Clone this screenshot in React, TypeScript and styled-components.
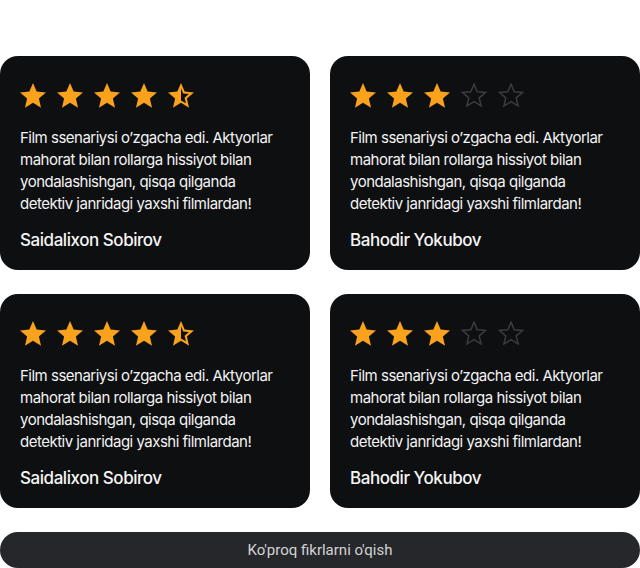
import React from "react";
import styled, { createGlobalStyle } from "styled-components";

const Global = createGlobalStyle`
  html, body { margin: 0; padding: 0; background: #ffffff; }
  * { box-sizing: border-box; }
`;

const Page = styled.div`
  width: 640px;
  padding-top: 56px;
  display: flex;
  flex-direction: column;
  gap: 24px;
  font-family: Inter, "Noto Sans", sans-serif;
`;

const Grid = styled.div`
  display: grid;
  grid-template-columns: 310px 310px;
  column-gap: 20px;
  row-gap: 24px;
`;

const Card = styled.div`
  background: #0e0f11;
  border-radius: 18px;
  height: 214px;
  padding: 27px 30px 18px 20px;
  display: flex;
  flex-direction: column;
`;

const Stars = styled.div`
  display: flex;
  gap: 11px;
  height: 25px;
  align-items: center;
`;

const Text = styled.p`
  margin: 19px 0 0;
  font-size: 15px;
  line-height: 22px;
  color: #f3f3f3;
  letter-spacing: -0.5px;
`;

const Name = styled.div`
  margin-top: 13px;
  font-size: 17px;
  font-weight: 500;
  line-height: 24px;
  color: #f5f5f5;
  letter-spacing: -0.45px;
`;

const Button = styled.button`
  height: 36px;
  width: 640px;
  border: none;
  border-radius: 18px;
  background: #26272b;
  color: #d2d3d5;
  font-family: Roboto, "Liberation Sans", sans-serif;
  font-size: 15px;
  padding: 0;
`;

const ORANGE = "#faa21b";
const GRAY = "#3a3b3f";

const FULL =
  "M12 17.27L18.18 21l-1.64-7.03L22 9.24l-7.19-.61L12 2 9.19 8.63 2 9.24l5.46 4.73L5.82 21z";
const HALF =
  "M22 9.24l-7.19-.62L12 2 9.19 8.63 2 9.24l5.46 4.73L5.82 21 12 17.27 18.18 21l-1.63-7.03L22 9.24zM12 15.4V6.1l1.71 4.04 4.38.38-3.32 2.88 1 4.28L12 15.4z";
const OUTLINE =
  "M12 2.9l2.48 5.86 6.36.54-4.83 4.18 1.45 6.21L12 16.4l-5.46 3.29 1.45-6.21-4.83-4.18 6.36-.54z";

type Kind = "full" | "half" | "empty";

const Star: React.FC<{ kind: Kind }> = ({ kind }) => (
  <svg width="26" height="25" viewBox="2 2 20 19.27">
    {kind === "empty" ? (
      <path d={OUTLINE} fill="none" stroke={GRAY} strokeWidth="1.2" strokeLinejoin="miter" />
    ) : (
      <path d={kind === "full" ? FULL : HALF} fill={ORANGE} />
    )}
  </svg>
);

const kindsFor = (rating: number): Kind[] =>
  [0, 1, 2, 3, 4].map((i) =>
    rating >= i + 1 ? "full" : rating >= i + 0.5 ? "half" : "empty"
  );

const REVIEW =
  "Film ssenariysi o\u2019zgacha edi. Aktyorlar mahorat bilan rollarga hissiyot bilan yondalashishgan, qisqa qilganda detektiv janridagi yaxshi filmlardan!";

const reviews = [
  { name: "Saidalixon Sobirov", rating: 4.5 },
  { name: "Bahodir Yokubov", rating: 3 },
  { name: "Saidalixon Sobirov", rating: 4.5 },
  { name: "Bahodir Yokubov", rating: 3 },
];

export default function App() {
  return (
    <>
      <Global />
      <Page>
        <Grid>
          {reviews.map((r, i) => (
            <Card key={i}>
              <Stars>
                {kindsFor(r.rating).map((k, j) => (
                  <Star key={j} kind={k} />
                ))}
              </Stars>
              <Text>{REVIEW}</Text>
              <Name>{r.name}</Name>
            </Card>
          ))}
        </Grid>
        <Button>Ko'proq fikrlarni o'qish</Button>
      </Page>
    </>
  );
}
